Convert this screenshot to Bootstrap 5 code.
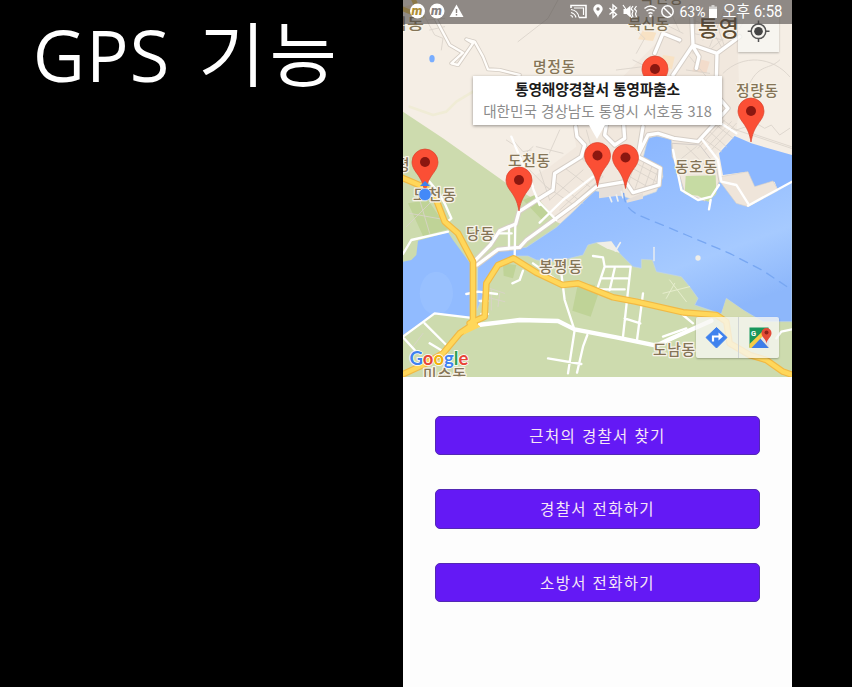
<!DOCTYPE html>
<html lang="ko">
<head>
<meta charset="utf-8">
<meta name="viewport" content="width=device-width, initial-scale=1">
<title>GPS 기능</title>
<link href="https://cdn.jsdelivr.net/npm/bootstrap@5.3.0/dist/css/bootstrap.min.css" rel="stylesheet">
<style>
body{background:#000;font-family:"Noto Sans CJK KR",sans-serif}
.slide{height:687px}
.title-side{width:403px;padding:3px 0 0 34px}
.title-side h1{font-size:69px;line-height:96px;color:#fff;font-weight:300;white-space:nowrap;margin:0}
.t-lat{font-family:"Open Sans","Noto Sans",sans-serif;font-weight:300;letter-spacing:3.3px;-webkit-text-stroke:2.2px #fff}
.t-kor{display:inline-block;letter-spacing:5px;margin-left:26px;-webkit-text-stroke:1.8px #fff;transform:scaleX(1.04);transform-origin:0 50%}
.phone{width:389px;background:#fdfdfd}
.map-area{height:377px}
.status{height:24px;background:rgba(75,70,68,.6)}
.status svg{position:absolute;left:0;top:0}
.info{left:70px;top:76px;width:249px;height:49px;background:#fff;box-shadow:0 1px 3px rgba(0,0,0,.4);padding-top:3px}
.info b{font-size:14.8px;line-height:20.5px;color:#1b1b1b;letter-spacing:-.2px;white-space:nowrap}
.info span{font-size:14.6px;line-height:21px;color:#8c8c8c;white-space:nowrap}
.info:after{content:"";position:absolute;left:116px;top:49px;border:8px solid transparent;border-top:14px solid #fff;border-bottom:0}
.mapbtn{background:rgba(247,247,244,.78);box-shadow:0 1px 2px rgba(0,0,0,.25)}
.locate{left:335px;top:12px;width:41px;height:40px}
.tools{left:293px;top:317px;width:83px;height:41px;border-radius:2px}
.tools div+div{border-left:1px solid #d0d4d4}
.actions{padding:38.5px 32px 0;gap:34px}
.actions .btn{height:39.5px;background:#6419f5;border:1px solid #5328b4;border-radius:5px;color:#f6e6f5;font-size:15.5px;line-height:20px;letter-spacing:1.35px;padding:0 0 1px}
.maplabel text{font-family:"Noto Sans CJK KR",sans-serif;font-weight:500;font-size:14.8px;fill:#857557;stroke:#f8f3e9;stroke-width:2.5px;paint-order:stroke;stroke-linejoin:round}
</style>
<script src="https://cdn.jsdelivr.net/npm/bootstrap@5.3.0/dist/js/bootstrap.bundle.min.js"></script>
</head>
<body>
<main class="slide d-flex overflow-hidden">
<section class="title-side flex-shrink-0"><h1><span class="t-lat">GPS</span> <span class="t-kor ms-2">기능</span></h1></section>
<section class="phone d-flex flex-column flex-shrink-0">
<div class="map-area position-relative overflow-hidden flex-shrink-0">
<svg class="d-block" width="389" height="377" viewBox="403 0 389 377">
<defs>
<linearGradient id="sea" gradientUnits="userSpaceOnUse" x1="700" y1="420" x2="900" y2="960"><stop offset="0" stop-color="#8bb7ff"/><stop offset=".4" stop-color="#98c0ff"/><stop offset=".7" stop-color="#a6caff"/><stop offset="1" stop-color="#8db7fb"/></linearGradient>
<g id="pin"><path d="M0 0C-1.500-8-3-12-7-18C-10-22-13-26-13-31A13 13 0 0 1 13-31C13-26 10-22 7-18C3-12 1.500-8 0 0Z" fill="#fb4f35" stroke="#d8432e" stroke-width=".7"/><circle cy="-31" r="5" fill="#8b1710"/></g>
</defs>
<g transform="translate(403) scale(.33333)" stroke-linejoin="round" stroke-linecap="round">
<path d="M0 0h1167v1131H0z" fill="#f5eee5"/>
<!-- built-up area -->
<path d="M340 560L440 500L520 440L510 380L640 250L760 130L850 30L1000 30L1010 300L1000 400L880 520L700 610L560 600L440 700Z" fill="#f1e8de"/>
<g fill="#f8e2c4"><path d="M780 165l35 5-8 38-40-10zM720 90l40 8-10 25-45-5zM0 20l45-10 20 30-30 15z"/></g>
<path d="M880 175l40 10-10 35-42-6z" fill="#f3dccb"/>
<g fill="none" stroke="#f0ecd6" stroke-width="8"><path d="M20 320l70 25 40-10 30-30 50-30"/></g>
<!-- green hills -->
<path d="M0 335L120 415L322 558L400 600L460 665L590 730L1167 900V1131H0Z" fill="#cddbae"/>
<!-- sea -->
<path fill="url(#sea)" stroke="#c6d6df" stroke-width="2" d="M225 800L290 748L370 742L460 682L500 645L575 572L665 590L690 600L760 575L780 530L775 500L720 475L735 415L760 408L805 418L808 450L830 520L840 570L920 605L950 545L1000 590L1035 620L1125 572L1167 545V965H1080L1020 930L970 895L955 942L920 930L875 915L885 895L860 860L835 830L760 815L748 780L715 778L715 805L690 800L650 760L625 725L580 728L555 735L540 765L460 785L400 780L375 768L330 768L285 790L258 830L248 870L222 930Z"/>
<path fill="#8bb7ff" d="M948 460L995 408L1045 430L1167 465V545L1125 572L1115 545L1055 560L1030 515L960 525Z"/>
<path fill="#91bbff" d="M45 722L135 697L150 720L205 795V955L95 940L0 1005V785L25 780L40 765Z"/>
<ellipse cx="100" cy="880" rx="50" ry="65" fill="#a3c7ff" opacity=".4"/>
<ellipse cx="87" cy="176" rx="8" ry="11" fill="#78adff"/>
<!-- headland and harbour -->
<path fill="#efe7dc" stroke="#d2ccc8" stroke-width="3" d="M808 430L890 435L940 500L948 545L935 585L905 603L845 578L822 500L808 470Z"/>
<path fill="#efe5da" stroke="#d8d2ca" stroke-width="2" d="M955 530L1035 515L1055 560L1110 543L1125 570L1035 620L1000 610L955 550Z"/>
<path d="M848 528l90-2 2 55-25 24-30-18-40-4z" fill="#c6dba3"/>
<path d="M588 560l70-5 5 30-75 10zM670 600l50-22v18l-48 12z" fill="#e6dfd9"/>
<g fill="#bfd397"><path d="M525 850l50 5 10 30-22 65-55-18zM15 610l60-10 60 88-75 20zM300 790l40 5-10 40-28-8zM360 600l35-15 45 50-20 28z"/></g>
<path d="M580 728l45-4 25 35-40-14z" fill="#f0eee6"/>
<path d="M955 942l15-45 50 33 50 35-30 40-60-30z" fill="#d3dbb0"/>
<!-- small streets -->
<g fill="none" stroke="#dad2ca" stroke-width="2.500">
<path d="M75 60l50-5M80 90l45-10M60 40l35 65 25 10-5 35M345 125l90-70 30-55M330 420l30 35 25-5M340 440l-30-20M350 475l40-35M1040 250c30-60 60-40 90-70M960 220c60-60 150-50 200 10M1000 390l60-20 25 15 20-10 25 30 30-20M985 385l180 60"/>
<path d="M700 160l25-45-30-30M640 210l80-10M690 180l60 30M760 60l80 40M770 90l60 40M800 30l30 65M850 210l70 10M860 170l50 60M880 30l-10 130M900 40l60 110M925 30l40 110M960 40l-40 100M990 60l-90 60M870 60l80 30M870 100l90 20M980 100l-60 50M1030 50l-40 70"/>
<path d="M430 560l90 60M450 540l90 70M480 500l80 60M440 600l100-90M470 630l110-100M500 620l100-90M410 510l30 90M380 510l60 60M530 470l70 60M540 430l70 60M550 390l20 70M470 390l-40 90M400 440l80 20"/>
<path d="M680 500l80 45M690 485l75 40M672 525l70 40M700 475l-25 80M725 480l-28 85M750 490l-28 80M765 510l-20 55"/>
<path d="M885 445l80-85M905 450l80-85M925 450l75-80M900 415l55 40M920 395l50 45M940 375l50 40M960 360l40 30M850 440l60 60M830 480l50-40M1045 400l120 40"/>
<path d="M245 860l60 20M245 890l60 15M265 870v60M290 880l-5 40M20 640l110 20M50 600l30 100M10 680l80-80M60 1000l-30 40"/>
</g>
<!-- cased white roads -->
<g fill="none" stroke="#d4ccc3" stroke-width="12"><path id="a1" d="M100 60L140 135L180 158L145 190L165 195L210 130L190 118L215 125L240 170L255 208L290 210L350 225"/></g>
<use href="#a1" fill="none" stroke="#fffdfa" stroke-width="7"/>
<g fill="none" stroke="#d6cec6" stroke-width="16"><path id="a2" d="M218 780L262 735L290 692L338 672L348 635L402 600L450 570L455 520L535 470L545 435L522 410L518 380M700 475L735 405L765 400L812 415L885 425L935 370L975 325L945 290M720 380L705 470L772 505L768 555L690 578L668 545L580 560L520 610L450 662L370 720L350 742L285 748L222 795M755 160L780 100L830 120M810 225L870 135L942 160L940 240M870 135L865 20M942 160L1010 110M870 140L888 170L880 205M610 375L605 405L635 435L665 415L662 375"/></g>
<use href="#a2" fill="none" stroke="#fff" stroke-width="10"/>
<g fill="none" stroke="#fff" stroke-width="7">
<path d="M337 672L335 770M288 700h38M318 685v55M402 600L460 660M390 565L410 615M410 668L480 600L570 530M325 410L350 470L390 560M895 415L945 480L955 545L1000 555L1035 610M923 600l-5 28M810 450L835 570L885 600L925 590L948 555M1035 617L1167 545M1000 400l-70-45M75 540L105 575L125 610L145 655L137 662M0 762L25 720L135 695M0 1010L95 940L200 953M65 970L130 1035M0 1012L35 1050M80 1030L130 1060"/>
<path d="M190 882L225 875L282 882M230 903h25M235 942h20M360 812L350 840L328 850M390 790L475 850M475 820L485 900L513 985M570 768L600 772L605 800L585 860M605 800L683 800L660 1010M598 835h75M590 868h75M635 805L620 870M720 880L702 1020M665 955L712 970M515 990L495 1120M553 1005L540 1040L522 1118M435 1075L535 1092M840 945L870 970M925 960L800 1020M780 1010L850 985M1120 1015L1135 995L1167 988"/>
</g>
<path d="M753 742v40" stroke="#f0f0f0" stroke-width="4"/>
<path d="M225 975L350 960L465 963L515 988L640 1012L760 1037L800 1018L925 962" fill="none" stroke="#fff" stroke-width="13"/>
<g stroke="#eef0f0" stroke-width="5"><path d="M620 590l6 15M640 585l5 18M655 575l5 18M652 728l-15 25"/></g>
<path d="M780 880l80-20M800 840l50 65M790 895l25-45" fill="none" stroke="#e6edcd" stroke-width="3"/>
<!-- main roads -->
<g fill="none" stroke="#f1b944" stroke-width="20"><path id="y" d="M-5 532L65 562L100 600L125 665L165 700L210 785V960M200 970L245 950L250 850L285 795L332 775L400 818L478 855L525 850L630 892L700 905L840 937L940 945L970 965L980 1030L1040 1065L1090 1080L1140 1115L1170 1125M215 970L170 1000L120 1060L60 1095L-5 1125"/></g>
<use href="#y" fill="none" stroke="#ffd75a" stroke-width="13"/>
<path d="M205 955L232 980L180 1005" fill="#ffd75a"/>
<path d="M-5 25L55 50L30-5" fill="none" stroke="#ecc34e" stroke-width="14"/>
<path d="M662 580C665 625 690 640 730 655L850 705L980 760L1080 812L1167 870" fill="none" stroke="#78a7f2" stroke-width="4" stroke-dasharray="26 20"/>
<circle cx="885" cy="774" r="8" fill="#f0eee8"/>
</g>
<g class="maplabel">
<text x="390" y="29" textLength="34" lengthAdjust="spacingAndGlyphs">림동</text>
<text x="533" y="71.500" textLength="42">명정동</text><text x="628" y="29" textLength="41">북신동</text>
<text x="640" y="3" textLength="43">북신동</text>
<text x="736" y="95.500" textLength="42">정량동</text><text x="508" y="166" textLength="42">도천동</text>
<text x="396" y="170">평</text><text x="413" y="200" textLength="43">도천동</text>
<text x="466" y="238.500" textLength="28">당동</text><text x="675" y="171.500" textLength="42">동호동</text>
<text x="539" y="272" textLength="43">봉평동</text><text x="653" y="355" textLength="42">도남동</text><text x="423" y="380" textLength="43">미수동</text>
<text x="698" y="36" textLength="41" style="font-size:22px;fill:#5c4c33;font-weight:500">통영</text>
</g>
<use href="#pin" x="655" y="100"/><use href="#pin" x="751" y="142"/><use href="#pin" x="519" y="211"/><use href="#pin" x="597.500" y="186.500"/><use href="#pin" x="625.500" y="188.500"/>
<use href="#pin" x="425" y="193"/><path d="M420 186l5-5 5 5z" fill="#3d80ed"/><circle cx="425" cy="194.500" r="6.200" fill="#4389f8" stroke="#d7e3ed" stroke-width=".8"/>
<text x="409.500" y="365" style="font:700 18.500px Lato,sans-serif;stroke:#fff;stroke-width:1.600px;paint-order:stroke"><tspan fill="#3f82ee">G</tspan><tspan fill="#e74637">o</tspan><tspan fill="#f2b20a">o</tspan><tspan fill="#3f82ee">g</tspan><tspan fill="#2da052">l</tspan><tspan fill="#e74637">e</tspan></text>
</svg>
<div class="info position-absolute d-flex flex-column align-items-center"><b>통영해양경찰서 통영파출소</b><span>대한민국 경상남도 통영시 서호동 318</span></div>
<div class="locate mapbtn position-absolute"><svg class="d-block" width="41" height="40" viewBox="0 0 41 40"><circle cx="20.500" cy="19.300" r="7.300" fill="none" stroke="#555" stroke-width="1.500"/><circle cx="20.500" cy="19.300" r="4.300" fill="#444"/><path d="M20.500 8.500v4M20.500 26v4M9.700 19.300h4M27.500 19.300h4" stroke="#555" stroke-width="1.500"/></svg></div>
<div class="tools mapbtn position-absolute d-flex">
<div class="w-50"><svg class="d-block" width="41" height="41"><path d="M20.500 10.500L31 20.500L20.500 31L10 20.500Z" fill="#3f82ee" stroke="#3f82ee" stroke-linejoin="round"/><path d="M17 24.500v-5h7" fill="none" stroke="#fff" stroke-width="2.200"/><path d="M22.500 15.500l4.500 4-4.500 4z" fill="#fff"/></svg></div>
<div class="w-50"><svg class="d-block" width="41" height="41"><path d="M10.500 10.500h19v20h-19z" fill="#17965a"/><path d="M10.500 31v-4L25 13l4.500 4v14z" fill="#f5cc45"/><path d="M12.500 31l9-9.500 8.500 9.500z" fill="#3e7de9"/><path d="M21.500 21.500l8.500 9.500V17l-3.500-.5z" fill="#e4e4ea"/><text x="12" y="18.500" fill="#fff" style="font:bold 7.500px Roboto,sans-serif">G</text><path d="M27.500 26.500c-.7-5-5-6-5-10.500a5 5 0 0 1 10 0c0 4.500-4.300 5.500-5 10.500z" fill="#e44a37"/><circle cx="27.500" cy="15.500" r="2" fill="#8f2118"/></svg></div>
</div>
<div class="status position-absolute top-0 start-0 w-100"><svg width="389" height="24" viewBox="403 0 389 24" fill="#fff">
<circle cx="417.500" cy="11" r="7.500"/><circle cx="437" cy="11" r="7.500"/>
<g style="font:italic 900 13px Roboto,sans-serif" text-anchor="middle"><text x="417" y="15" fill="#ad8d36">m</text><text x="436.500" y="15" fill="#85807f">m</text></g>
<path d="M456.500 4.500L463.500 17H449.500Z"/><path d="M456.500 9v4M456.500 14v1.500" stroke="#8b8380" stroke-width="1.400"/>
<path d="M571 8V5.500h15v12h-7" fill="none" stroke="#fff" stroke-width="1.600"/><path d="M571 9.500q7 1 8 8M571 12.500q4 1 5 5M570.500 15.500q2 0 2 2M574 8h9.500v7" fill="none" stroke="#fff" stroke-width="1.200"/>
<path d="M598 18c-1-4-4.700-6-4.700-9a4.700 4.700 0 0 1 9.400 0c0 3-3.700 5-4.700 9z"/><circle cx="598" cy="9" r="1.700" fill="#817b78"/>
<path d="M609.500 8l7 6.500-3.500 3V5l3.500 3-7 6.500" fill="none" stroke="#fff" stroke-width="1.400"/>
<path d="M623.500 9h3l4-3.500v12l-4-3.500h-3z"/><path d="M623 5l9 13M633 6l-2 3 2 2-1 3 1 3M636.500 6l-2 3 2 2-1 3 1 3" fill="none" stroke="#fff" stroke-width="1.200"/>
<path d="M644.500 8.500q6-5 12 0M646.500 11q4-3 8 0M648.500 13.500q2-1.500 4 0" fill="none" stroke="#fff" stroke-width="1.500"/><circle cx="650.500" cy="16" r="1.300"/>
<circle cx="667.500" cy="11.500" r="5.700" fill="none" stroke="#fff" stroke-width="1.500"/><path d="M663.500 7.500l8 8" stroke="#fff" stroke-width="1.500"/>
<path d="M711.500 5h3v1.500h2.500V18h-8V6.500h2.500z" opacity=".6"/><path d="M709 9h8v9h-8z"/>
<g style="font:400 15px Roboto,'Noto Sans CJK KR',sans-serif"><text x="679.500" y="17" textLength="26" lengthAdjust="spacingAndGlyphs">63%</text><text x="722.500" y="17" textLength="60" lengthAdjust="spacingAndGlyphs" style="font-size:16px">오후 6:58</text></g>
</svg></div>
</div>
<div class="actions d-flex flex-column"><button type="button" class="btn w-100">근처의 경찰서 찾기</button><button type="button" class="btn w-100">경찰서 전화하기</button><button type="button" class="btn w-100">소방서 전화하기</button></div>
</section>
</main>
</body>
</html>
